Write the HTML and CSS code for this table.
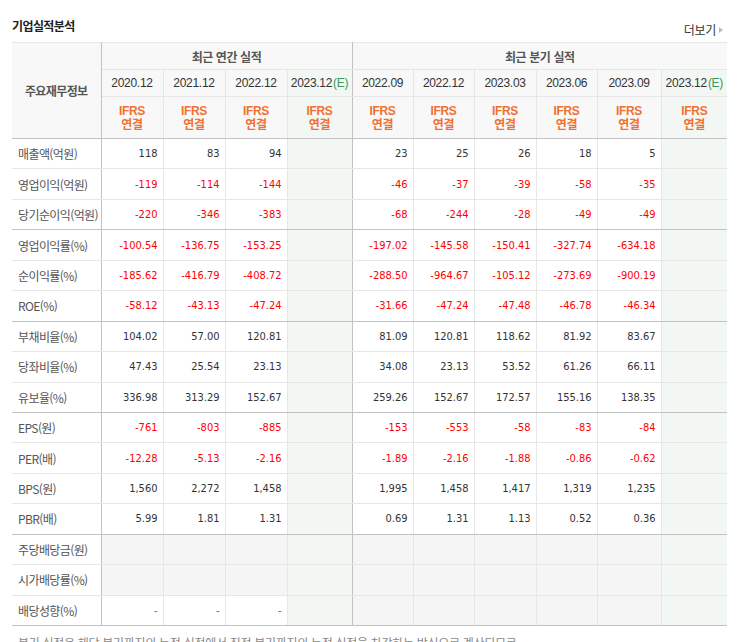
FILE: index.html
```html
<!DOCTYPE html>
<html lang="ko">
<head>
<meta charset="utf-8">
<title>기업실적분석</title>
<link rel="stylesheet" href="styles.css">
</head>
<body>
<div class="wrap">
  <div class="head">
    <h3 class="title">기업실적분석</h3>
    <a class="more" href="#">더보기<span class="arr"></span></a>
  </div>
  <table class="perf">
    <colgroup>
      <col class="c-lbl"><col class="c62"><col class="c62"><col class="c62"><col class="c65">
      <col class="c61"><col class="c61"><col class="c62"><col class="c61"><col class="c64"><col class="c66">
    </colgroup>
    <thead>
      <tr class="h1">
        <th rowspan="3" class="lbl-head">주요재무정보</th>
        <th colspan="4" class="grp sep">최근 연간 실적</th>
        <th colspan="6" class="grp">최근 분기 실적</th>
      </tr>
      <tr class="h2">
        <th>2020.12</th><th>2021.12</th><th>2022.12</th><th class="est sep">2023.12<span class="e">(E)</span></th>
        <th>2022.09</th><th>2022.12</th><th>2023.03</th><th>2023.06</th><th>2023.09</th><th class="est">2023.12<span class="e">(E)</span></th>
      </tr>
      <tr class="h3">
        <th><span class="ifrs">IFRS<br>연결</span></th><th><span class="ifrs">IFRS<br>연결</span></th><th><span class="ifrs">IFRS<br>연결</span></th><th class="est sep"><span class="ifrs">IFRS<br>연결</span></th>
        <th><span class="ifrs">IFRS<br>연결</span></th><th><span class="ifrs">IFRS<br>연결</span></th><th><span class="ifrs">IFRS<br>연결</span></th><th><span class="ifrs">IFRS<br>연결</span></th><th><span class="ifrs">IFRS<br>연결</span></th><th class="est"><span class="ifrs">IFRS<br>연결</span></th>
      </tr>
    </thead>
    <tbody>
      <tr><th>매출액(억원)</th><td>118</td><td>83</td><td>94</td><td class="est sep"></td><td>23</td><td>25</td><td>26</td><td>18</td><td>5</td><td class="est"></td></tr>
      <tr><th>영업이익(억원)</th><td class="neg">-119</td><td class="neg">-114</td><td class="neg">-144</td><td class="est sep"></td><td class="neg">-46</td><td class="neg">-37</td><td class="neg">-39</td><td class="neg">-58</td><td class="neg">-35</td><td class="est"></td></tr>
      <tr class="gend"><th>당기순이익(억원)</th><td class="neg">-220</td><td class="neg">-346</td><td class="neg">-383</td><td class="est sep"></td><td class="neg">-68</td><td class="neg">-244</td><td class="neg">-28</td><td class="neg">-49</td><td class="neg">-49</td><td class="est"></td></tr>
      <tr><th>영업이익률(%)</th><td class="neg">-100.54</td><td class="neg">-136.75</td><td class="neg">-153.25</td><td class="est sep"></td><td class="neg">-197.02</td><td class="neg">-145.58</td><td class="neg">-150.41</td><td class="neg">-327.74</td><td class="neg">-634.18</td><td class="est"></td></tr>
      <tr><th>순이익률(%)</th><td class="neg">-185.62</td><td class="neg">-416.79</td><td class="neg">-408.72</td><td class="est sep"></td><td class="neg">-288.50</td><td class="neg">-964.67</td><td class="neg">-105.12</td><td class="neg">-273.69</td><td class="neg">-900.19</td><td class="est"></td></tr>
      <tr class="gend"><th>ROE(%)</th><td class="neg">-58.12</td><td class="neg">-43.13</td><td class="neg">-47.24</td><td class="est sep"></td><td class="neg">-31.66</td><td class="neg">-47.24</td><td class="neg">-47.48</td><td class="neg">-46.78</td><td class="neg">-46.34</td><td class="est"></td></tr>
      <tr><th>부채비율(%)</th><td>104.02</td><td>57.00</td><td>120.81</td><td class="est sep"></td><td>81.09</td><td>120.81</td><td>118.62</td><td>81.92</td><td>83.67</td><td class="est"></td></tr>
      <tr><th>당좌비율(%)</th><td>47.43</td><td>25.54</td><td>23.13</td><td class="est sep"></td><td>34.08</td><td>23.13</td><td>53.52</td><td>61.26</td><td>66.11</td><td class="est"></td></tr>
      <tr class="gend"><th>유보율(%)</th><td>336.98</td><td>313.29</td><td>152.67</td><td class="est sep"></td><td>259.26</td><td>152.67</td><td>172.57</td><td>155.16</td><td>138.35</td><td class="est"></td></tr>
      <tr><th>EPS(원)</th><td class="neg">-761</td><td class="neg">-803</td><td class="neg">-885</td><td class="est sep"></td><td class="neg">-153</td><td class="neg">-553</td><td class="neg">-58</td><td class="neg">-83</td><td class="neg">-84</td><td class="est"></td></tr>
      <tr><th>PER(배)</th><td class="neg">-12.28</td><td class="neg">-5.13</td><td class="neg">-2.16</td><td class="est sep"></td><td class="neg">-1.89</td><td class="neg">-2.16</td><td class="neg">-1.88</td><td class="neg">-0.86</td><td class="neg">-0.62</td><td class="est"></td></tr>
      <tr><th>BPS(원)</th><td>1,560</td><td>2,272</td><td>1,458</td><td class="est sep"></td><td>1,995</td><td>1,458</td><td>1,417</td><td>1,319</td><td>1,235</td><td class="est"></td></tr>
      <tr class="gend"><th>PBR(배)</th><td>5.99</td><td>1.81</td><td>1.31</td><td class="est sep"></td><td>0.69</td><td>1.31</td><td>1.13</td><td>0.52</td><td>0.36</td><td class="est"></td></tr>
      <tr><th>주당배당금(원)</th><td class="na"></td><td class="na"></td><td class="na"></td><td class="est sep"></td><td class="na"></td><td class="na"></td><td class="na"></td><td class="na"></td><td class="na"></td><td class="est"></td></tr>
      <tr><th>시가배당률(%)</th><td class="na"></td><td class="na"></td><td class="na"></td><td class="est sep"></td><td class="na"></td><td class="na"></td><td class="na"></td><td class="na"></td><td class="na"></td><td class="est"></td></tr>
      <tr class="gend"><th>배당성향(%)</th><td class="dash">-</td><td class="dash">-</td><td class="dash">-</td><td class="est sep"></td><td class="na"></td><td class="na"></td><td class="na"></td><td class="na"></td><td class="na"></td><td class="est"></td></tr>
    </tbody>
  </table>
  <p class="note">분기 실적은 해당 분기까지의 누적 실적에서 직전 분기까지의 누적 실적을 차감하는 방식으로 계산되므로</p>
</div>
</body>
</html>
```
FILE: styles.css
```css
* { box-sizing: border-box; }
html, body { margin: 0; padding: 0; background: #fff; }
body {
  font-family: "Noto Sans CJK KR", "Noto Sans", sans-serif;
  font-size: 12px;
  color: #333;
}
.wrap { padding: 0 10px 0 12px; }
.head {
  display: flex;
  justify-content: space-between;
  align-items: flex-start;
  height: 42px;
}
.title {
  margin: 17px 0 0 0;
  font-size: 12px;
  line-height: 17px;
  font-weight: bold;
  color: #222;
  letter-spacing: -0.6px;
}
.more {
  margin-top: 21px;
  margin-right: 4px;
  font-size: 12px;
  line-height: 17px;
  color: #333;
  text-decoration: none;
  display: flex;
  align-items: center;
  letter-spacing: -0.3px;
}
.arr {
  display: inline-block;
  width: 0; height: 0;
  margin-left: 3px;
  border-left: 4px solid #bbb;
  border-top: 3.5px solid transparent;
  border-bottom: 3.5px solid transparent;
}
.perf {
  width: 715px;
  table-layout: fixed;
  border-collapse: collapse;
  border-top: 1px solid #c2c2c2;
}
.c-lbl { width: 89px; }
.c61 { width: 61px; }
.c62 { width: 62px; }
.c64 { width: 64px; }
.c65 { width: 65px; }
.c66 { width: 66px; }
.perf th, .perf td {
  border: 1px solid #e6e6e6;
  padding: 0;
}
.perf tr > :first-child { border-left: none; }
.perf tr > :last-child { border-right: none; }
.perf thead th {
  background: #f8f8f8;
  font-weight: normal;
  text-align: center;
  color: #333;
}
.perf thead .lbl-head {
  border-right: 1px solid #c2c2c2;
  border-bottom: 1px solid #c2c2c2;
  color: #555;
  font-weight: bold;
  letter-spacing: -0.6px;
}
.perf .h1 { height: 27px; }
.perf .h2 { height: 27px; }
.perf .h3 { height: 42px; }
.perf .h1 .grp {
  font-weight: bold;
  color: #555;
  letter-spacing: -0.4px;
}
.perf .h2 th {
  font-family: "Liberation Sans", "Noto Sans CJK KR", sans-serif;
  font-size: 12px;
  letter-spacing: -0.3px;
  color: #333;
}
.perf .h3 th { border-bottom: 1px solid #c2c2c2; }
.perf .e { color: #3d9a5a; margin-left: 1px; }
.ifrs {
  display: inline-block;
  font-family: "Liberation Sans", "Noto Sans CJK KR", sans-serif;
  font-weight: bold;
  font-size: 12px;
  line-height: 14px;
  color: #f07134;
  letter-spacing: -0.3px;
}
.perf .sep { border-right: 1px solid #c2c2c2; }
.perf thead th.est, .perf td.est { background: #f2f7f3; }
.perf tbody tr { height: 30.44px; }
.perf tbody th {
  text-align: left;
  padding-left: 6px;
  font-weight: normal;
  color: #555;
  letter-spacing: -0.6px;
  border-right: 1px solid #c2c2c2;
  background: #fff;
  white-space: nowrap;
}
.perf tbody td {
  text-align: right;
  padding-right: 5px;
  font-family: "DejaVu Sans Condensed", "Liberation Sans", sans-serif;
  font-size: 11px;
  color: #333;
}
.perf tbody td.neg { color: #ff0000; }
.perf tbody td.na { background: #f5f5f5; }
.perf tbody td.dash { color: #666; }
.perf tbody tr.gend > * { border-bottom: 1px solid #c2c2c2; }
.note {
  margin: 9px 0 0 6px;
  font-size: 12px;
  line-height: 16px;
  color: #888;
  letter-spacing: -0.3px;
  white-space: nowrap;
}
```
